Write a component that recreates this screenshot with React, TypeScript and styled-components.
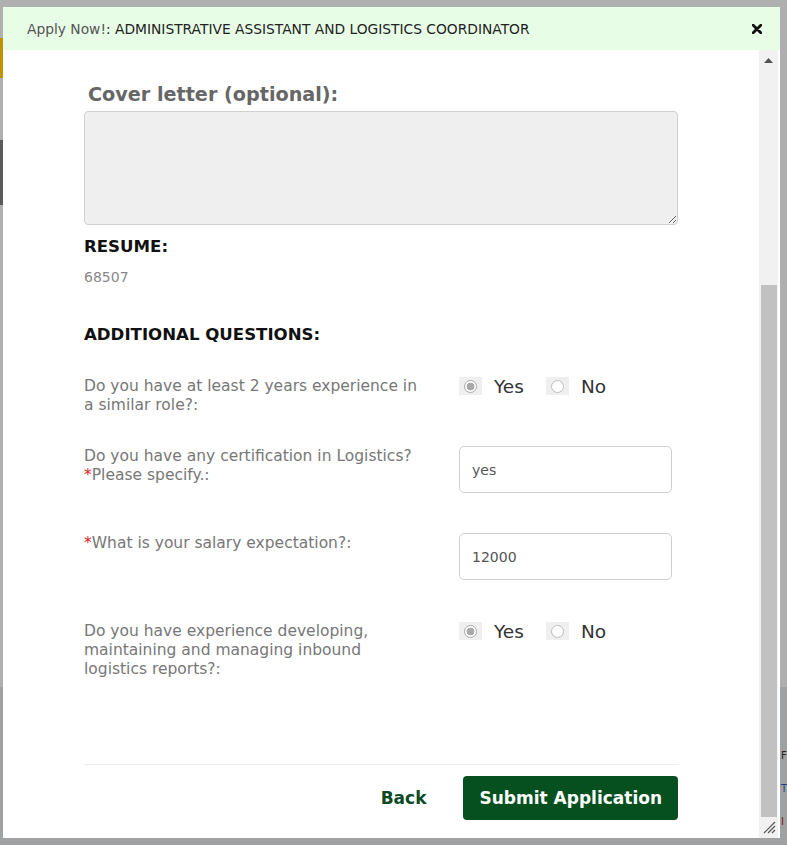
import React from 'react';
import styled, { createGlobalStyle } from 'styled-components';

const GlobalStyle = createGlobalStyle`
	html, body {
		margin: 0;
		padding: 0;
	}
	body {
		font-family: "DejaVu Sans", "Liberation Sans", sans-serif;
		background: #afafaf;
		overflow: hidden;
	}
`;

/* page behind the overlay, already dimmed */
const BackPage = styled.div`
	height: 845px;
	display: flex;
	flex-direction: column;
`;

const BackBlock = styled.div<{ $h: number; $top: number; $bg: string }>`
	width: 300px;
	height: ${({ $h }) => $h}px;
	margin-top: ${({ $top }) => $top}px;
	background: ${({ $bg }) => $bg};
`;

const BackFooter = styled.div`
	margin-top: auto;
	height: 158px;
	background: #9fa1a3;
	display: flex;
	flex-direction: column;
	gap: 20px;
	padding: 62px 0 0 781px;
	box-sizing: border-box;
	font-size: 10px;
	line-height: 13px;
	color: #222;
	white-space: nowrap;
`;

const BackLink = styled.span<{ $color: string }>`
	color: ${({ $color }) => $color};
`;

const Dialog = styled.div`
	position: fixed;
	top: 7px;
	left: 3px;
	width: 777px;
	height: 831px;
	background: #fff;
	display: flex;
	flex-direction: column;
`;

const Header = styled.div`
	height: 43px;
	flex: none;
	background: #e8fde6;
	display: flex;
	align-items: center;
	justify-content: space-between;
	padding: 0 18px 0 24px;
`;

const Title = styled.div`
	font-size: 13.8px;
	color: #222;
	white-space: nowrap;
`;

const TitleLead = styled.span`
	color: #555;
`;

const CloseButton = styled.button`
	border: 0;
	background: none;
	padding: 0;
	width: 10px;
	height: 10px;
	display: flex;
	cursor: pointer;
`;

const Body = styled.div`
	flex: 1;
	min-height: 0;
	display: flex;
	position: relative;
`;

const Content = styled.div`
	flex: 1;
	display: flex;
	flex-direction: column;
	padding: 0 81px 18px;
	overflow: hidden;
`;

const CoverLabel = styled.div`
	margin-top: 33px;
	font-size: 19.2px;
	line-height: 24px;
	font-weight: 700;
	color: #666;
	padding-left: 4px;
`;

const CoverArea = styled.textarea`
	margin-top: 4px;
	height: 114px;
	box-sizing: border-box;
	width: 100%;
	background: #efefef;
	border: 1px solid #d0d0d0;
	border-radius: 4px;
	font-family: inherit;
	resize: vertical;
`;

const SectionTitle = styled.div<{ $top: number }>`
	margin-top: ${({ $top }) => $top}px;
	font-size: 16.6px;
	line-height: 20px;
	font-weight: 700;
	color: #111;
`;

const ResumeId = styled.div`
	margin-top: 11px;
	font-size: 14px;
	line-height: 18px;
	color: #888;
`;

const QuestionRow = styled.div<{ $top: number }>`
	margin-top: ${({ $top }) => $top}px;
	display: grid;
	grid-template-columns: 375px 1fr;
	align-items: start;
`;

const QuestionLabel = styled.div`
	font-size: 15.5px;
	line-height: 19px;
	color: #777;
	white-space: nowrap;
	padding-top: 1px;
`;

const Required = styled.span`
	color: #e31b1b;
`;

const RadioGroup = styled.div`
	display: flex;
	align-items: center;
	height: 20px;
`;

const RadioBox = styled.span`
	width: 23px;
	height: 18px;
	background: #efefef;
	display: flex;
	align-items: center;
	justify-content: center;
`;

const RadioDot = styled.span<{ $checked?: boolean }>`
	width: 11px;
	height: 11px;
	border-radius: 50%;
	border: 1px solid ${({ $checked }) => ($checked ? '#a8a8a8' : '#bdbdbd')};
	background: ${({ $checked }) => ($checked ? 'radial-gradient(circle, #a9a9a9 0 3.6px, #fff 4.2px)' : '#fff')};
`;

const RadioText = styled.span`
	font-size: 18.5px;
	color: #333;
	margin: 0 22px 0 12px;
`;

const TextInput = styled.input`
	width: 213px;
	height: 47px;
	box-sizing: border-box;
	border: 1px solid #cfcfcf;
	border-radius: 5px;
	padding: 0 12px;
	font-family: inherit;
	font-size: 14px;
	color: #555;
	background: #fff;
	outline: none;
`;

const Footer = styled.div`
	margin-top: auto;
	border-top: 1px solid #ececec;
	padding-top: 11px;
	display: flex;
	justify-content: flex-end;
	align-items: center;
	gap: 21px;
`;

const Button = styled.button<{ $primary?: boolean }>`
	height: 44px;
	padding: 0 16px;
	border: 0;
	border-radius: 4px;
	font-family: inherit;
	font-size: 17px;
	font-weight: 700;
	cursor: pointer;
	background: ${({ $primary }) => ($primary ? '#06501f' : 'transparent')};
	color: ${({ $primary }) => ($primary ? '#fff' : '#0b4a24')};
`;

const ScrollBar = styled.div`
	width: 19px;
	flex: none;
	margin-right: 2px;
	background: #f1f1f1;
	display: flex;
	flex-direction: column;
`;

const ScrollArrow = styled.div`
	height: 17px;
	display: flex;
	align-items: center;
	justify-content: center;
	padding-top: 4px;
	box-sizing: border-box;
`;

const ScrollTrack = styled.div`
	flex: 1;
	padding: 218px 1px 0 2px;
	display: flex;
	flex-direction: column;
`;

const ScrollThumb = styled.div`
	height: 532px;
	background: #c1c1c1;
`;

const ScrollCorner = styled.div`
	height: 21px;
	flex: none;
`;

const ResizeGrip = styled.svg`
	position: absolute;
	right: 4px;
	bottom: 4px;
`;

type Question =
	| { kind: 'radio'; lines: React.ReactNode[]; top: number }
	| { kind: 'text'; lines: React.ReactNode[]; top: number; value: string };

const questions: Question[] = [
	{
		kind: 'radio',
		top: 31,
		lines: ['Do you have at least 2 years experience in', 'a similar role?:'],
	},
	{
		kind: 'text',
		top: 31,
		value: 'yes',
		lines: [
			'Do you have any certification in Logistics?',
			<>
				<Required>*</Required>Please specify.:
			</>,
		],
	},
	{
		kind: 'text',
		top: 40,
		value: '12000',
		lines: [
			<>
				<Required>*</Required>What is your salary expectation?:
			</>,
		],
	},
	{
		kind: 'radio',
		top: 41,
		lines: ['Do you have experience developing,', 'maintaining and managing inbound', 'logistics reports?:'],
	},
];

const YesNo = () => (
	<RadioGroup>
		<RadioBox>
			<RadioDot $checked />
		</RadioBox>
		<RadioText>Yes</RadioText>
		<RadioBox>
			<RadioDot />
		</RadioBox>
		<RadioText>No</RadioText>
	</RadioGroup>
);

export default function App() {
	return (
		<>
			<GlobalStyle />
			<BackPage>
				<BackBlock $top={38} $h={40} $bg="#bf9300" />
				<BackBlock $top={62} $h={65} $bg="#5a5a5a" />
				<BackFooter>
					<BackLink $color="#222">F</BackLink>
					<BackLink $color="#1d3c8a">T</BackLink>
					<BackLink $color="#7a1a10">I</BackLink>
				</BackFooter>
			</BackPage>

			<Dialog>
				<Header>
					<Title>
						<TitleLead>Apply Now!</TitleLead>: ADMINISTRATIVE ASSISTANT AND LOGISTICS COORDINATOR
					</Title>
					<CloseButton aria-label="close">
						<svg width="10" height="10" viewBox="0 0 10 10">
							<path d="M1.2 1.2 L8.8 8.8 M8.8 1.2 L1.2 8.8" stroke="#111" strokeWidth="2.8" strokeLinecap="round" />
						</svg>
					</CloseButton>
				</Header>

				<Body>
					<Content>
						<CoverLabel>Cover letter (optional):</CoverLabel>
						<CoverArea readOnly />

						<SectionTitle $top={12}>RESUME:</SectionTitle>
						<ResumeId>68507</ResumeId>

						<SectionTitle $top={39}>ADDITIONAL QUESTIONS:</SectionTitle>

						{questions.map((q, i) => (
							<QuestionRow key={i} $top={q.top}>
								<QuestionLabel>
									{q.lines.map((line, j) => (
										<div key={j}>{line}</div>
									))}
								</QuestionLabel>
								{q.kind === 'radio' ? <YesNo /> : <TextInput readOnly value={q.value} />}
							</QuestionRow>
						))}

						<Footer>
							<Button>Back</Button>
							<Button $primary>Submit Application</Button>
						</Footer>
					</Content>

					<ScrollBar>
						<ScrollArrow>
							<svg width="9" height="5" viewBox="0 0 9 5">
								<path d="M0 5 L4.5 0 L9 5 Z" fill="#505050" />
							</svg>
						</ScrollArrow>
						<ScrollTrack>
							<ScrollThumb />
						</ScrollTrack>
						<ScrollCorner />
					</ScrollBar>

					<ResizeGrip width="13" height="13" viewBox="0 0 13 13">
						<path d="M1 12 L12 1 M5 12 L12 5 M9 12 L12 9" stroke="#555" strokeWidth="1.2" />
					</ResizeGrip>
				</Body>
			</Dialog>
		</>
	);
}
